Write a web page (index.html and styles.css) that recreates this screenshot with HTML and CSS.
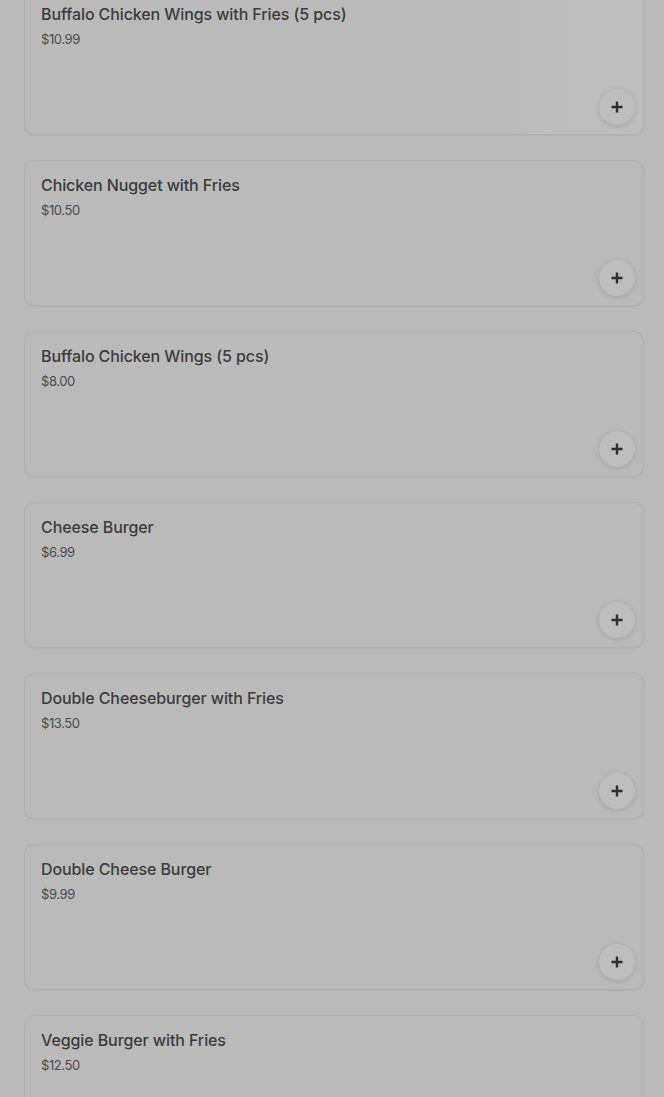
FILE: index.html
```html
<!DOCTYPE html>
<html lang="en">
<head>
<meta charset="utf-8">
<title>Menu</title>
<link rel="stylesheet" href="styles.css">
</head>
<body>
<main class="list">
  <article class="card card--first">
    <div class="info">
      <h3 class="name">Buffalo Chicken Wings with Fries (5 pcs)</h3>
      <p class="price">$10.99</p>
    </div>
    <div class="thumb"></div>
    <button class="add" aria-label="Add"><svg viewBox="0 0 12 12" width="12" height="12"><path d="M6 0.5v11M0.5 6h11" stroke="currentColor" stroke-width="2.4"/></svg></button>
  </article>
  <article class="card">
    <div class="info">
      <h3 class="name">Chicken Nugget with Fries</h3>
      <p class="price">$10.50</p>
    </div>
    <button class="add" aria-label="Add"><svg viewBox="0 0 12 12" width="12" height="12"><path d="M6 0.5v11M0.5 6h11" stroke="currentColor" stroke-width="2.4"/></svg></button>
  </article>
  <article class="card">
    <div class="info">
      <h3 class="name">Buffalo Chicken Wings (5 pcs)</h3>
      <p class="price">$8.00</p>
    </div>
    <button class="add" aria-label="Add"><svg viewBox="0 0 12 12" width="12" height="12"><path d="M6 0.5v11M0.5 6h11" stroke="currentColor" stroke-width="2.4"/></svg></button>
  </article>
  <article class="card">
    <div class="info">
      <h3 class="name">Cheese Burger</h3>
      <p class="price">$6.99</p>
    </div>
    <button class="add" aria-label="Add"><svg viewBox="0 0 12 12" width="12" height="12"><path d="M6 0.5v11M0.5 6h11" stroke="currentColor" stroke-width="2.4"/></svg></button>
  </article>
  <article class="card">
    <div class="info">
      <h3 class="name">Double Cheeseburger with Fries</h3>
      <p class="price">$13.50</p>
    </div>
    <button class="add" aria-label="Add"><svg viewBox="0 0 12 12" width="12" height="12"><path d="M6 0.5v11M0.5 6h11" stroke="currentColor" stroke-width="2.4"/></svg></button>
  </article>
  <article class="card">
    <div class="info">
      <h3 class="name">Double Cheese Burger</h3>
      <p class="price">$9.99</p>
    </div>
    <button class="add" aria-label="Add"><svg viewBox="0 0 12 12" width="12" height="12"><path d="M6 0.5v11M0.5 6h11" stroke="currentColor" stroke-width="2.4"/></svg></button>
  </article>
  <article class="card">
    <div class="info">
      <h3 class="name">Veggie Burger with Fries</h3>
      <p class="price">$12.50</p>
    </div>
    <button class="add" aria-label="Add"><svg viewBox="0 0 12 12" width="12" height="12"><path d="M6 0.5v11M0.5 6h11" stroke="currentColor" stroke-width="2.4"/></svg></button>
  </article>
</main>
</body>
</html>
```

FILE: styles.css
```css
html, body {
  margin: 0;
  padding: 0;
  background: #bababa;
  font-family: Inter, "Noto Sans", "Liberation Sans", sans-serif;
}

.list {
  display: flex;
  flex-direction: column;
  gap: 25px;
  padding: 0 20px 0 24px;
  margin-top: -11px;
}

.card {
  position: relative;
  height: 146px;
  box-sizing: border-box;
  border: 1px solid #b1b1b1;
  border-radius: 10px;
  background: #bababa;
  box-shadow: 0 1px 1px rgba(0,0,0,0.04);
  display: flex;
  overflow: hidden;
}

.info {
  flex: 1;
  padding: 14px 16px 0 16px;
}

.thumb {
  width: 143px;
  background: linear-gradient(90deg, #bababa, #bcbcbc 20%, #bdbdbd);
}

.name {
  margin: 0;
  font-size: 16px;
  line-height: 20px;
  font-weight: 500;
  color: #3b3b3b;
  letter-spacing: -0.1px;
}

.price {
  margin: 6px 0 0;
  font-size: 13px;
  line-height: 18px;
  font-weight: 400;
  color: #4a4a4a;
  letter-spacing: -0.4px;
}

.add {
  position: absolute;
  right: 8px;
  bottom: 9px;
  width: 36px;
  height: 36px;
  border-radius: 50%;
  border: none;
  padding: 0;
  background: #bdbdbd;
  color: #2e2e2e;
  box-shadow: 0 1px 5px rgba(0,0,0,0.12);
  display: flex;
  align-items: center;
  justify-content: center;
}

.add svg {
  display: block;
}
```
